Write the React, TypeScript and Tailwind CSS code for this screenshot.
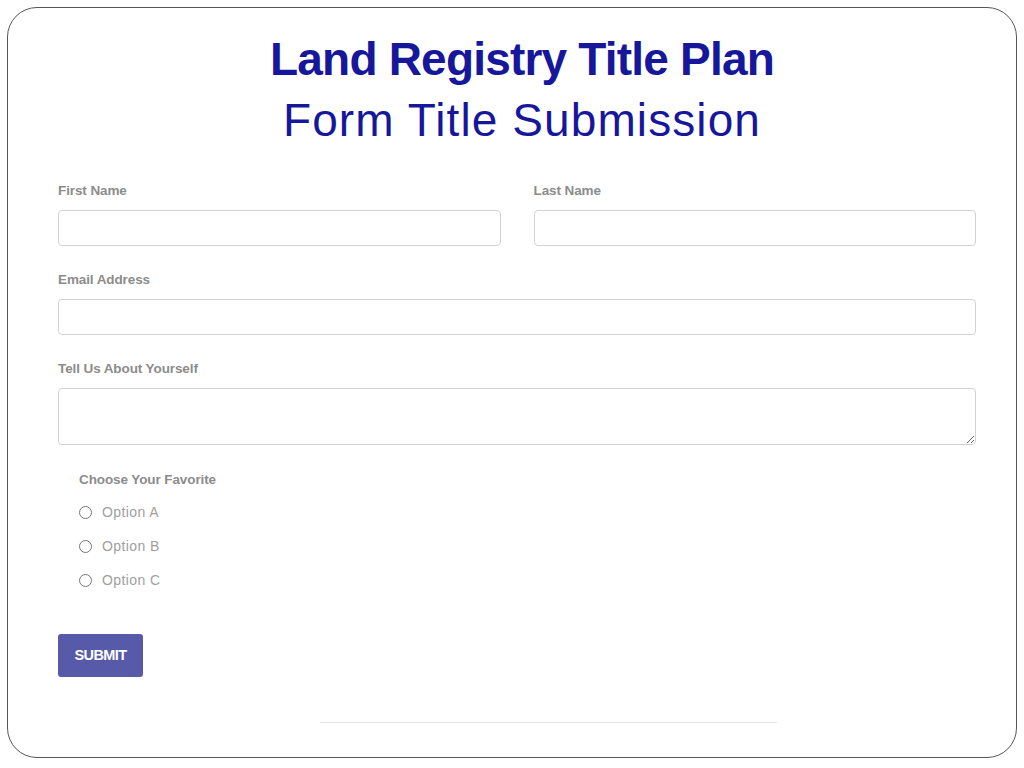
import React from 'react';

const labelCls = "block text-[13.5px] font-bold text-[#8c8c8c] leading-[20px] tracking-[-0.1px]";
const inputCls = "block w-full h-[36px] rounded-[4px] border border-[#d2d2d2] bg-white";

const App: React.FC = () => {
  return (
    <div className="w-[1024px] h-[768px] bg-white pl-[7px] pt-[7px] pr-[7px] pb-[10px]" style={{ fontFamily: '"Liberation Sans", Arial, sans-serif' }}>
      <div className="h-full w-full rounded-[30px] border border-[#555] bg-white flex flex-col">
        <div className="pt-[21px] text-center text-[#17179b] pl-[20px]">
          <h1 className="text-[46px] font-bold leading-[61px] tracking-[-0.8px]">Land Registry Title Plan</h1>
          <h2 className="text-[46px] font-normal leading-[61px] tracking-[1.1px]">Form Title Submission</h2>
        </div>

        <form className="pl-[50px] pr-[40px] pt-[30px]">
          <div className="grid grid-cols-2 gap-x-[33px]">
            <div>
              <label className={labelCls}>First Name</label>
              <input className={`${inputCls} mt-[9px]`} />
            </div>
            <div>
              <label className={labelCls}>Last Name</label>
              <input className={`${inputCls} mt-[9px]`} />
            </div>
          </div>

          <div className="mt-[24px]">
            <label className={labelCls}>Email Address</label>
            <input className={`${inputCls} mt-[9px]`} />
          </div>

          <div className="mt-[24px]">
            <label className={labelCls}>Tell Us About Yourself</label>
            <textarea className="block w-full h-[57px] mt-[9px] rounded-[4px] border border-[#d2d2d2] bg-white resize-y" />
          </div>

          <div className="mt-[25px] pl-[21px]">
            <div className={labelCls}>Choose Your Favorite</div>
            <div className="mt-[12px] flex flex-col gap-[14px]">
              {['Option A', 'Option B', 'Option C'].map((o) => (
                <label key={o} className="flex items-center h-[20px] gap-[10px] text-[14px] tracking-[0.4px] text-[#a0a0a0]">
                  <span className="w-[13px] h-[13px] rounded-full border border-[#777] bg-white" />
                  {o}
                </label>
              ))}
            </div>
          </div>

          <button type="button" className="mt-[44px] w-[85px] h-[43px] rounded-[3px] bg-[#565aa9] text-white text-[14.5px] font-bold tracking-[-0.6px]">
            SUBMIT
          </button>
        </form>

        <div className="mt-[45px] ml-[312px] w-[457px] border-t border-[#e6e6e6]" />
      </div>
    </div>
  );
};

export default App;
